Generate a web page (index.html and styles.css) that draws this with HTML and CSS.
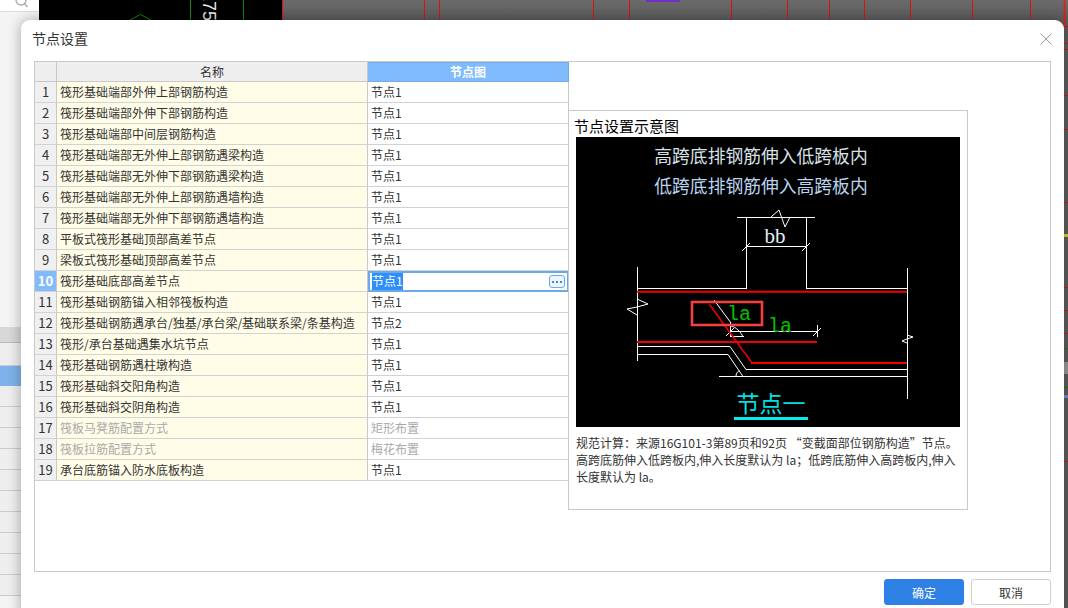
FILE: index.html
```html
<!DOCTYPE html>
<html lang="zh-CN">
<head>
<meta charset="utf-8">
<title>节点设置</title>
<link rel="stylesheet" href="styles.css">
</head>
<body>
<div class="screen">
  <aside class="sidebar">
    <div class="search">
      <svg class="search-icon" viewBox="0 0 14 14" width="14" height="14"><circle cx="6" cy="3" r="5" fill="none" stroke="#aaa" stroke-width="1.4"/><path d="M9.5 6.5 L12.5 10" stroke="#aaa" stroke-width="1.4"/></svg>
    </div>
    <div class="side-gap"></div>
    <div class="side-head"></div>
    <div class="side-row"></div>
    <div class="side-row side-active"></div>
    <div class="side-row"></div><div class="side-row"></div><div class="side-row"></div><div class="side-row"></div>
    <div class="side-row"></div><div class="side-row"></div><div class="side-row"></div><div class="side-row"></div>
    <div class="side-row"></div><div class="side-row"></div>
  </aside>
  <svg class="canvas" viewBox="39 0 1029 608" width="1029" height="608">
    <defs><linearGradient id="g" x1="0" y1="0" x2="0" y2="1"><stop offset="0" stop-color="#6a6a6a"/><stop offset="1" stop-color="#5c5c5c"/></linearGradient></defs>
    <rect x="39" y="0" width="243" height="608" fill="#000"/>
    <rect x="282" y="0" width="786" height="608" fill="#5e5e5e"/>
    <rect x="282" y="0" width="786" height="20" fill="url(#g)"/>
    <g stroke="#0a8a0a" stroke-width="1" fill="none"><path d="M190.5 0V20M243.5 0V20"/><path d="M130 20L140.500 14.500L151 20"/></g>
    <text class="cad-num" transform="translate(203 -9) rotate(90)">175</text>
    <g stroke="#e01010" stroke-width="1"><path d="M282.500 0V20M424.500 0V20M439.500 0V20M593.500 0V20M629.500 0V20M731.500 0V20M787.500 0V20M829.500 0V20M864.500 0V20M910.500 0V20M972.500 0V20M1030.500 0V20"/>
      <path d="M1064 26.500H1068M1064 43.500H1068M1064 49.500H1068M1064 95.500H1068M1064 129.500H1068M1064 202.500H1068M1064 287.500H1068M1064 310.500H1068M1064 333.500H1068M1064 461.500H1068"/></g>
    <path d="M1064.500 0V26" stroke="#ff1010" stroke-width="1.500"/>
    <rect x="646" y="0" width="34" height="2" fill="#7030c0"/>
    <rect x="1064" y="234" width="4" height="3" fill="#d8d820"/>
    <path d="M1064 348.500H1068M1064 387.500H1068" stroke="#0a8a0a"/>
    <rect x="1064" y="395" width="4" height="3" fill="#7090e0"/>
    <rect x="1064" y="362" width="4" height="12" fill="#9a9a9a"/>
  </svg>

  <section class="dialog">
    <header class="dialog-head">
      <h1 class="dialog-title">节点设置</h1>
      <svg class="close" viewBox="0 0 12 12" width="12" height="12"><path d="M0.500 0.500L11.500 11.500M11.500 0.500L0.500 11.500" stroke="#999" stroke-width="1" fill="none"/></svg>
    </header>
    <div class="panel">
      <table class="grid">
        <thead>
          <tr><th class="num"></th><th class="name">名称</th><th class="node active">节点图</th></tr>
        </thead>
        <tbody>
          <tr><td class="num">1</td><td class="name">筏形基础端部外伸上部钢筋构造</td><td class="node">节点1</td></tr>
          <tr><td class="num">2</td><td class="name">筏形基础端部外伸下部钢筋构造</td><td class="node">节点1</td></tr>
          <tr><td class="num">3</td><td class="name">筏形基础端部中间层钢筋构造</td><td class="node">节点1</td></tr>
          <tr><td class="num">4</td><td class="name">筏形基础端部无外伸上部钢筋遇梁构造</td><td class="node">节点1</td></tr>
          <tr><td class="num">5</td><td class="name">筏形基础端部无外伸下部钢筋遇梁构造</td><td class="node">节点1</td></tr>
          <tr><td class="num">6</td><td class="name">筏形基础端部无外伸上部钢筋遇墙构造</td><td class="node">节点1</td></tr>
          <tr><td class="num">7</td><td class="name">筏形基础端部无外伸下部钢筋遇墙构造</td><td class="node">节点1</td></tr>
          <tr><td class="num">8</td><td class="name">平板式筏形基础顶部高差节点</td><td class="node">节点1</td></tr>
          <tr><td class="num">9</td><td class="name">梁板式筏形基础顶部高差节点</td><td class="node">节点1</td></tr>
          <tr><td class="num num-active">10</td><td class="name">筏形基础底部高差节点</td><td class="node editing"><div class="editor"><span class="selected">节点1</span><span class="more"><i></i><i></i><i></i></span></div></td></tr>
          <tr><td class="num">11</td><td class="name">筏形基础钢筋锚入相邻筏板构造</td><td class="node">节点1</td></tr>
          <tr><td class="num">12</td><td class="name">筏形基础钢筋遇承台/独基/承台梁/基础联系梁/条基构造</td><td class="node">节点2</td></tr>
          <tr><td class="num">13</td><td class="name">筏形/承台基础遇集水坑节点</td><td class="node">节点1</td></tr>
          <tr><td class="num">14</td><td class="name">筏形基础钢筋遇柱墩构造</td><td class="node">节点1</td></tr>
          <tr><td class="num">15</td><td class="name">筏形基础斜交阳角构造</td><td class="node">节点1</td></tr>
          <tr><td class="num">16</td><td class="name">筏形基础斜交阴角构造</td><td class="node">节点1</td></tr>
          <tr class="muted"><td class="num">17</td><td class="name">筏板马凳筋配置方式</td><td class="node">矩形布置</td></tr>
          <tr class="muted"><td class="num">18</td><td class="name">筏板拉筋配置方式</td><td class="node">梅花布置</td></tr>
          <tr><td class="num">19</td><td class="name">承台底筋锚入防水底板构造</td><td class="node">节点1</td></tr>
        </tbody>
      </table>
      <div class="preview">
        <h2 class="preview-title">节点设置示意图</h2>
        <svg class="diagram" viewBox="576 137 384 290" width="384" height="290">
          <rect x="576" y="137" width="384" height="290" fill="#000"/>
          <text class="d-title" x="761" y="163">高跨底排钢筋伸入低跨板内</text>
          <text class="d-title d-title2" x="761" y="193">低跨底排钢筋伸入高跨板内</text>
          <g fill="none" stroke="#fff" stroke-width="1" shape-rendering="crispEdges">
            <path d="M737 217.500H815M746.500 217.500V288.500H637M806.500 217.500V288.500H907M637.500 267V361M907.500 268V399"/>
            <path d="M746 246.500H806"/>
            <path d="M730.500 322V336M730 331.500H818M817.500 325V337M730 336.500H744"/>
            <path d="M637 346.500H730M637 354.500H728M746 369.500H907M719 376.500H907"/>
          </g>
          <g fill="none" stroke="#fff" stroke-width="1">
            <path d="M771 217L779 210L785 227L790 217"/>
            <path d="M742 251L750 243M802 251L810 243"/>
            <path d="M637 299L648 304L637 307L627 309L637 315"/>
            <path d="M907 335L913 337L907 339L902 341L907 343"/>
            <path d="M714 300L731 323M726 336L734 328M813 336L821 328"/>
            <path d="M731 326C736 327 741 332 743 337"/>
            <path d="M730 346.500L746 369.500M728 354.500L743 376.500"/>
            <path d="M736 376C736 373 738 371 740 371"/>
          </g>
          <g fill="none" stroke="#f00000">
            <path d="M637 291.700H907M637 342H817M751 363H907" stroke-width="2"/>
            <path d="M709.500 304.500L752 363" stroke-width="1.500"/>
          </g>
          <rect x="692" y="302" width="70" height="23" fill="none" stroke="#f44040" stroke-width="2.600"/>
          <text class="d-dim" x="764.500" y="243">bb</text>
          <text class="d-la" x="727" y="320">la</text>
          <text class="d-la" x="768" y="331.500">la</text>
          <text class="d-node" x="771" y="412">节点一</text>
          <rect x="734" y="417" width="74" height="3" fill="#00f0f0"/>
        </svg>
        <p class="desc">规范计算：来源16G101-3第89页和92页 “变截面部位钢筋构造”节点。<br>高跨底筋伸入低跨板内,伸入长度默认为 la；低跨底筋伸入高跨板内,伸入<br>长度默认为 la。</p>
      </div>
    </div>
    <footer class="dialog-foot">
      <button class="btn btn-primary" type="button">确定</button>
      <button class="btn" type="button">取消</button>
    </footer>
  </section>
</div>
</body>
</html>
```

FILE: styles.css
```css
* { box-sizing: border-box; }
html, body { margin: 0; padding: 0; height: 100%; overflow: hidden; }
body { font-family: "Noto Sans CJK SC", "Noto Sans", sans-serif; font-size: 12px; color: #333; background: #fff; }
.screen { position: relative; width: 1068px; height: 608px; display: flex; overflow: hidden; }

/* Background application, behind the dialog */
.sidebar { width: 39px; flex: none; background: #f4f4f4; display: flex; flex-direction: column; }
.search { height: 12px; background: #fff; border-bottom: 1px solid #ddd; position: relative; overflow: hidden; }
.search-icon { position: absolute; left: 15px; top: -3px; }
.side-gap { height: 315px; background: #f4f4f4; }
.side-head { height: 16px; background: #d8d8d8; border-bottom: 1px solid #bbb; }
.side-row { height: 21px; background: #eee; border-bottom: 1px solid #ccc; flex: none; }
.side-row:nth-child(4) { height: 23px; }
.side-active { background: #7fb2ea; border-bottom-color: #7fb2ea; height: 20px; }
.canvas { display: block; flex: none; }
.cad-num { font-family: "Liberation Sans", sans-serif; font-size: 18px; fill: #e8e8e8; }

/* Dialog */
.dialog { position: absolute; left: 21px; top: 20px; width: 1043px; height: 600px; background: #fff; border-radius: 9px 9px 0 0; box-shadow: 0 0 14px rgba(0, 0, 0, 0.32); padding: 0 13px; display: flex; flex-direction: column; }
.dialog-head { height: 41px; flex: none; display: flex; align-items: flex-start; justify-content: space-between; padding: 8px 12px 0 0; margin: 0 -13px 0 -2px; }
.dialog-title { margin: 0; font-size: 14px; font-weight: 400; color: #333; line-height: 20px; }
.close { display: block; margin-top: 5px; }

.panel { width: 1017px; height: 511px; flex: none; border: 1px solid #c8c8c8; display: flex; align-items: flex-start; }

/* Grid */
.grid { border-collapse: separate; border-spacing: 0; table-layout: fixed; width: 534px; flex: none; }
.grid th, .grid td { height: 21px; padding: 0 0 1px; font-size: 12px; font-weight: 400; line-height: 19px; white-space: nowrap; overflow: hidden; border-bottom: 1px solid #d2d2d2; border-right: 1px solid #c8c8c8; }
.grid thead th { height: 20px; padding: 0; line-height: 19px; background: #eee; border-bottom: 1px solid #c8c8c8; text-align: center; font-size: 12px; }
.grid thead th.active { background: #80bbfb; color: #fff; font-weight: 700; line-height: 18px; border: 1px solid #6fabee; border-left: 0; }
.num { width: 22px; }
.name { width: 311px; }
.node { width: 201px; }
.grid td.num { background: #f0f0f0; text-align: center; font-size: 13px; }
.grid td.num-active { background: #80bbfb; color: #fff; font-weight: 700; }
.grid td.name { background: #fffde8; padding-left: 3px; }
.grid td.node { padding-left: 3px; background: #fff; }
.muted td.name, .muted td.node { color: #aaa; }
.grid td.editing { padding: 0; border: 0; }
.editor { height: 21px; border: 2px solid #6aaaea; display: flex; align-items: center; justify-content: space-between; padding: 0 2px 0 2px; }
.selected { background: #2f8ffa; color: #fff; line-height: 16px; height: 17px; }
.more { width: 16px; height: 13px; border: 1px solid #6aaaea; border-radius: 3px; background: #eef4fc; display: flex; align-items: center; justify-content: center; gap: 2px; }
.more i { display: block; width: 2px; height: 2px; background: #3a8ae8; }

/* Preview */
.preview { width: 400px; height: 400px; flex: none; margin: 48px 0 0 -1px; border: 1px solid #c8c8c8; background: #fff; padding: 0 0 0 7px; display: flex; flex-direction: column; }
.preview-title { margin: 0 0 0 -2px; font-size: 15px; font-weight: 400; line-height: 20px; padding-top: 5px; height: 26px; color: #000; white-space: nowrap; }
.diagram { display: block; flex: none; }
.d-title { font-size: 17.800px; fill: #d8e0e8; text-anchor: middle; font-weight: 400; }
.d-title2 { fill: #b8d4f0; }
.d-dim { font-family: "Liberation Serif", serif; font-size: 21px; fill: #e4eefa; }
.d-la { font-family: "Liberation Mono", monospace; font-size: 20px; fill: #00c000; }
.d-node { font-size: 23px; fill: #00e0e0; text-anchor: middle; }
.desc { margin: 7px 0 0; font-size: 12px; line-height: 17px; color: #333; white-space: nowrap; }

/* Footer */
.dialog-foot { display: flex; justify-content: flex-end; gap: 7px; padding-top: 7px; width: 1017px; }
.btn { width: 80px; height: 26px; padding: 0; font-family: inherit; font-size: 12px; color: #333; background: #fff; border: 1px solid #d0d0d0; border-radius: 3px; }
.btn-primary { background: #2f80e4; border-color: #2f80e4; color: #fff; }
```
